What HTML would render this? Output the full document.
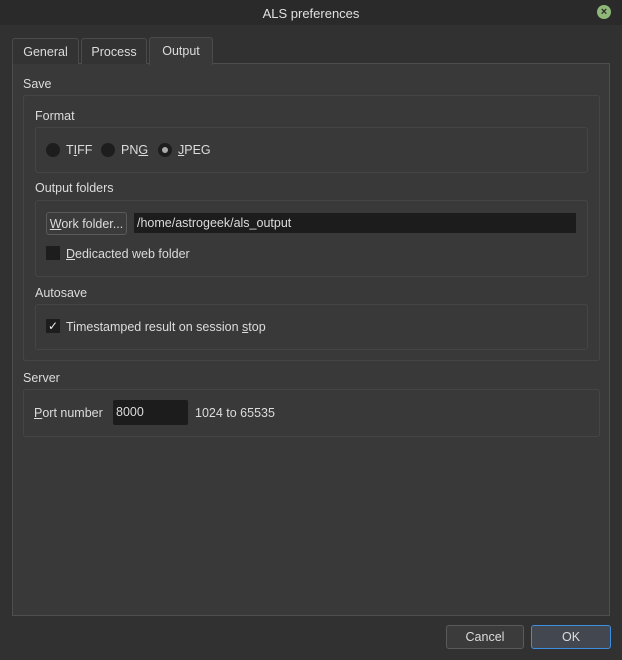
<!DOCTYPE html>
<html><head><style>
*{box-sizing:border-box;margin:0;padding:0}
body{width:622px;height:660px;background:#313131;font-family:"Liberation Sans","DejaVu Sans",sans-serif;font-size:12.5px;color:#dcdcdc;position:relative;overflow:hidden}
.a{position:absolute}
.title{left:0;top:0;width:622px;height:25px;background:#2a2a2a;text-align:center;line-height:27px;font-size:13px;color:#e0e0e0}
.close{left:597px;top:5px;width:14px;height:14px;border-radius:50%;background:#8fb878;color:#2a2a2a;font-size:11px;line-height:14px;text-align:center;font-weight:bold}
.tab{top:38px;height:26px;border:1px solid #4a4a4a;border-bottom:none;border-radius:3px 3px 0 0;background:#333;text-align:center;line-height:26px}
.pane{left:12px;top:63px;width:598px;height:553px;background:#393939;border:1px solid #4e4e4e}
.box{border:1px solid #454545;border-radius:3px}
.radio{width:14px;height:14px;border-radius:50%;background:#1d1d1d}
.edit{background:#1c1c1c;padding-left:3px;line-height:20px}
.btn{border:1px solid #5a5a5a;border-radius:3px;background:#3b3b3b;text-align:center}
u{text-decoration:underline}
</style></head><body>
<div class="a title">ALS preferences</div>
<div class="a close">×</div>
<div class="a pane"></div>
<div class="a tab" style="left:12px;width:67px">General</div>
<div class="a tab" style="left:81px;width:66px">Process</div>
<div class="a tab" style="left:149px;width:64px;top:37px;background:#393939;height:28px">Output</div>
<div class="a" style="left:23px;top:77px">Save</div>
<div class="a box" style="left:23px;top:95px;width:577px;height:266px"></div>
<div class="a" style="left:35px;top:109px">Format</div>
<div class="a box" style="left:35px;top:127px;width:553px;height:46px"></div>
<div class="a radio" style="left:46px;top:143px"></div><div class="a" style="left:66px;top:143px">T<u>I</u>FF</div>
<div class="a radio" style="left:101px;top:143px"></div><div class="a" style="left:121px;top:143px">PN<u>G</u></div>
<div class="a radio" style="left:158px;top:143px"><div class="a" style="left:4px;top:4px;width:6px;height:6px;border-radius:50%;background:#aaa"></div></div><div class="a" style="left:178px;top:143px"><u>J</u>PEG</div>
<div class="a" style="left:35px;top:181px">Output folders</div>
<div class="a box" style="left:35px;top:200px;width:553px;height:77px"></div>
<div class="a btn" style="left:46px;top:212px;width:81px;height:23px;line-height:22px"><u>W</u>ork folder...</div>
<div class="a edit" style="left:134px;top:213px;width:442px;height:20px;line-height:21px">/home/astrogeek/als_output</div>
<div class="a" style="left:46px;top:246px;width:14px;height:14px;background:#1d1d1d"></div>
<div class="a" style="left:66px;top:247px"><u>D</u>edicacted web folder</div>
<div class="a" style="left:35px;top:286px">Autosave</div>
<div class="a box" style="left:35px;top:304px;width:553px;height:46px"></div>
<div class="a" style="left:46px;top:319px;width:14px;height:14px;background:#1d1d1d;color:#eee;font-size:12px;line-height:14px;text-align:center">✓</div>
<div class="a" style="left:66px;top:320px">Timestamped result on session <u>s</u>top</div>
<div class="a" style="left:23px;top:371px">Server</div>
<div class="a box" style="left:23px;top:389px;width:577px;height:48px"></div>
<div class="a" style="left:34px;top:406px"><u>P</u>ort number</div>
<div class="a edit" style="left:113px;top:400px;width:75px;height:25px;line-height:25px;border-radius:2px">8000</div>
<div class="a" style="left:195px;top:406px">1024 to 65535</div>
<div class="a btn" style="left:446px;top:625px;width:78px;height:24px;line-height:23px">Cancel</div>
<div class="a btn" style="left:531px;top:625px;width:80px;height:24px;line-height:23px;border-color:#3d8ee0;background:#434850">OK</div>
</body></html>
